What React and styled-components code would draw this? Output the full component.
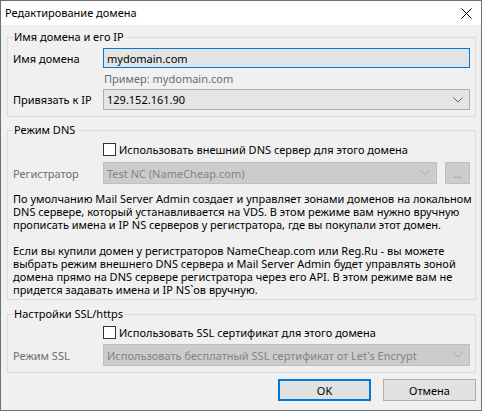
import styled, { createGlobalStyle } from 'styled-components';

const GlobalStyle = createGlobalStyle`
    html, body {
        margin: 0;
        padding: 0;
        background: #f0f0f0;
    }
    body {
        font-family: "Noto Sans", "Open Sans", sans-serif;
        font-size: 11px;
        color: #000;
    }
`;

const Window = styled.div`
    width: 482px;
    height: 411px;
    box-sizing: border-box;
    border: 1px solid #707070;
    background: #f0f0f0;
    display: flex;
    flex-direction: column;
`;

const TitleBar = styled.div`
    height: 24px;
    flex: none;
    background: #fff;
    display: flex;
    align-items: center;
    justify-content: space-between;
    padding-left: 4px;
    padding-right: 9px;
`;

const Title = styled.span`
    font-size: 11px;
    line-height: 14px;
`;

const Content = styled.div`
    flex: 1;
    padding: 5px 5px 0 6px;
    display: flex;
    flex-direction: column;
`;

const Group = styled.fieldset`
    margin: ${p => p.$top || 0}px 0 0 0;
    padding: 0 5px ${p => p.$bottom || 6}px 5px;
    border: 1px solid #dcdcdc;
    min-width: 0;
`;

const Legend = styled.legend`
    padding: 0 2px 0 1px;
    line-height: 14px;
    font-size: 11px;
`;

const Row = styled.div`
    display: grid;
    grid-template-columns: 90px 1fr;
    align-items: center;
    margin-top: ${p => p.$top || 0}px;
`;

const Label = styled.span`
    color: ${p => (p.$disabled ? '#6d6d6d' : '#000')};
    line-height: 14px;
    padding-top: 1px;
`;

const TextBox = styled.div`
    height: 20px;
    box-sizing: border-box;
    border: 1px solid #0078d7;
    background: #e3e3e3;
    padding-left: 3px;
    display: flex;
    align-items: center;
`;

const Hint = styled.span`
    color: #6d6d6d;
    line-height: 14px;
    padding: 2px 0 0 1px;
`;

const Combo = styled.div`
    flex: 1;
    height: ${p => p.$h || 22}px;
    box-sizing: border-box;
    border: 1px solid ${p => (p.$disabled ? '#bfbfbf' : '#adadad')};
    background: ${p => (p.$disabled ? '#cccccc' : '#e5e5e5')};
    color: ${p => (p.$disabled ? '#838383' : '#000')};
    display: flex;
    align-items: center;
    justify-content: space-between;
    padding: 0 6px 0 3px;
    white-space: nowrap;
`;

const ComboLine = styled.div`
    display: flex;
    gap: 8px;
`;

const DotsButton = styled.div`
    width: 25px;
    height: 22px;
    box-sizing: border-box;
    border: 1px solid #bfbfbf;
    background: #cccccc;
    color: #838383;
    display: flex;
    align-items: center;
    justify-content: center;
    font-size: 10px;
    padding-top: 2px;
`;

const CheckLine = styled.label`
    display: flex;
    align-items: center;
    gap: 3px;
    height: 16px;
`;

const Box = styled.span`
    width: 13px;
    height: 13px;
    box-sizing: border-box;
    border: 1px solid #333;
    background: #fff;
    flex: none;
`;

const Text = styled.p`
    margin: 8px 0 0 0;
    line-height: 13px;
    white-space: pre;
`;

const Footer = styled.div`
    display: flex;
    justify-content: flex-end;
    gap: 12px;
    margin-top: 6px;
`;

const Button = styled.button`
    width: 93px;
    height: 22px;
    box-sizing: border-box;
    border: ${p => (p.$primary ? '2px solid #0078d7' : '1px solid #adadad')};
    background: #e1e1e1;
    font: inherit;
    font-size: 11px;
    color: #000;
    padding: 0;
`;

function Chevron({ color }) {
    return (
        <svg width="10" height="6" viewBox="0 0 10 6">
            <path d="M0.5 0.5 L5 5 L9.5 0.5" fill="none" stroke={color} strokeWidth="1" />
        </svg>
    );
}

function CloseIcon() {
    return (
        <svg width="11" height="11" viewBox="0 0 11 11">
            <path d="M0.5 0.5 L10.5 10.5 M10.5 0.5 L0.5 10.5" stroke="#000" strokeWidth="1" />
        </svg>
    );
}

const dnsText = `По умолчанию Mail Server Admin создает и управляет зонами доменов на локальном
DNS сервере, который устанавливается на VDS. В этом режиме вам нужно вручную
прописать имена и IP NS серверов у регистратора, где вы покупали этот домен.

Если вы купили домен у регистраторов NameCheap.com или Reg.Ru - вы можете
выбрать режим внешнего DNS сервера и Mail Server Admin будет управлять зоной
домена прямо на DNS сервере регистратора через его API. В этом режиме вам не
придется задавать имена и IP NS\`ов вручную.`;

export default function App() {
    return (
        <>
            <GlobalStyle />
            <Window>
                <TitleBar>
                    <Title>Редактирование домена</Title>
                    <CloseIcon />
                </TitleBar>
                <Content>
                    <Group>
                        <Legend>Имя домена и его IP</Legend>
                        <Row $top={4}>
                            <Label>Имя домена</Label>
                            <TextBox>mydomain.com</TextBox>
                        </Row>
                        <Row $top={2}>
                            <span />
                            <Hint>Пример: mydomain.com</Hint>
                        </Row>
                        <Row $top={3}>
                            <Label>Привязать к IP</Label>
                            <Combo $h={21}>
                                129.152.161.90
                                <Chevron color="#606060" />
                            </Combo>
                        </Row>
                    </Group>

                    <Group $top={6} $bottom={3}>
                        <Legend>Режим DNS</Legend>
                        <Row $top={4}>
                            <span />
                            <CheckLine>
                                <Box />
                                Использовать внешний DNS сервер для этого домена
                            </CheckLine>
                        </Row>
                        <Row $top={5}>
                            <Label $disabled>Регистратор</Label>
                            <ComboLine>
                                <Combo $disabled>
                                    Test NC (NameCheap.com)
                                    <Chevron color="#a8a8a8" />
                                </Combo>
                                <DotsButton>...</DotsButton>
                            </ComboLine>
                        </Row>
                        <Text>{dnsText}</Text>
                    </Group>

                    <Group $top={7}>
                        <Legend>Настройки SSL/https</Legend>
                        <Row $top={3}>
                            <span />
                            <CheckLine>
                                <Box />
                                Использовать SSL сертификат для этого домена
                            </CheckLine>
                        </Row>
                        <Row $top={4}>
                            <Label $disabled>Режим SSL</Label>
                            <Combo $disabled>
                                Использовать бесплатный SSL сертификат от Let's Encrypt
                                <Chevron color="#a8a8a8" />
                            </Combo>
                        </Row>
                    </Group>

                    <Footer>
                        <Button $primary>OK</Button>
                        <Button>Отмена</Button>
                    </Footer>
                </Content>
            </Window>
        </>
    );
}
